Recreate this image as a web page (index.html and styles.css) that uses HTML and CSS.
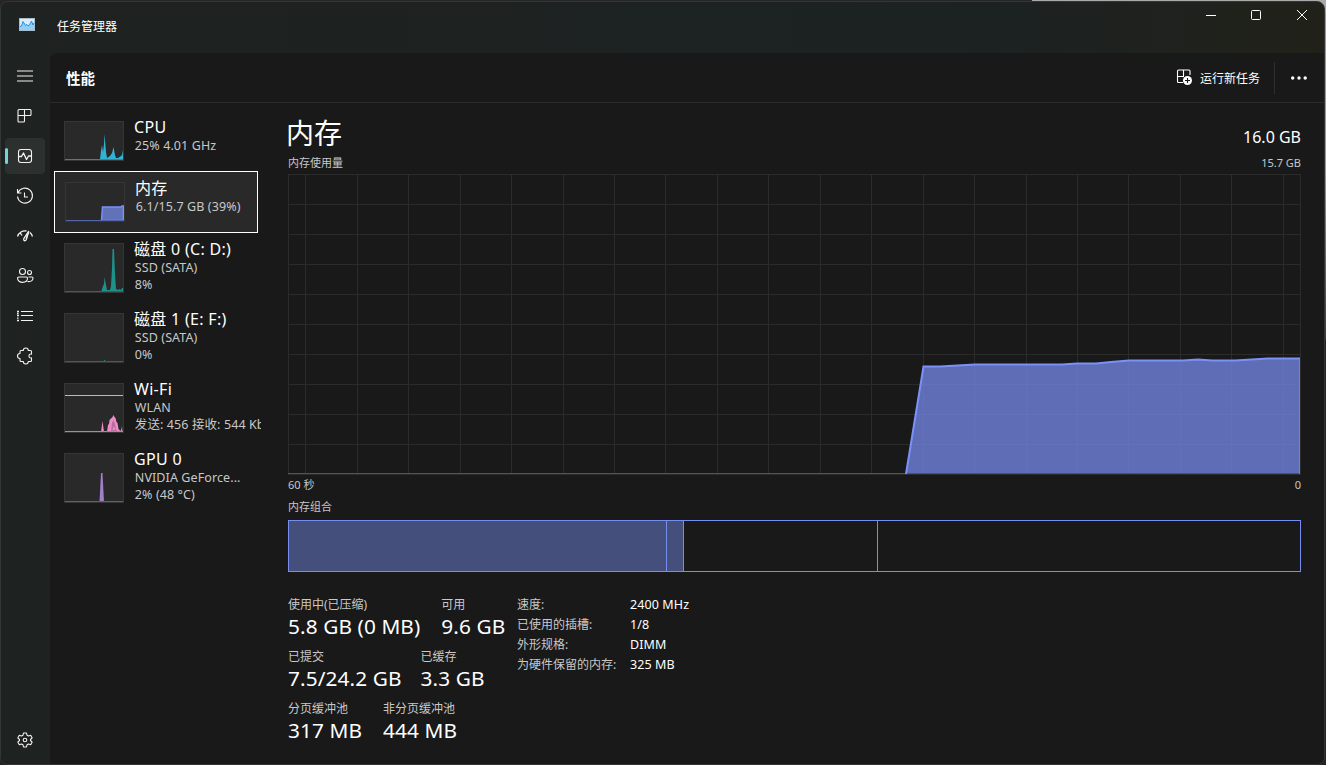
FILE: index.html
```html
<!DOCTYPE html>
<html lang="zh-CN">
<head>
<meta charset="utf-8">
<title>任务管理器</title>
<link rel="stylesheet" href="styles.css">
</head>
<body>
<div class="window">
  <header class="titlebar">
    <svg class="app-icon" width="16" height="13" viewBox="0 0 16 13"><rect x=".5" y=".5" width="15" height="12" fill="#dcebf7" stroke="#a9bccb"/><path d="M1 8.500 2.500 8l1.500-4.500L6.500 7.500 8 6.500l1 1.500 1.500-1 2-4L14 7l1-2v7H1z" fill="#8fd0f8"/><path d="M1 8.500 2.500 8l1.500-4.500L6.500 7.500 8 6.500l1 1.500 1.500-1 2-4L14 7l1-2" fill="none" stroke="#2490e0"/></svg>
    <h1 class="app-title">任务管理器</h1>
    <div class="controls">
      <svg width="46" height="30" viewBox="0 0 46 30"><path d="M18 15.500h10"/></svg>
      <svg width="46" height="30" viewBox="0 0 46 30"><rect x="17.500" y="10.500" width="9" height="9" rx="1"/></svg>
      <svg width="46" height="30" viewBox="0 0 46 30"><path d="m17 10 10 10M27 10 17 20"/></svg>
    </div>
  </header>
  <div class="body">
    <nav class="rail">
      <div class="rail-item"><svg width="20" height="20" viewBox="0 0 20 20"><path d="M2 5.500h16M2 10.500h16M2 15.500h16" transform="translate(0 -.5)"/></svg></div>
      <div class="rail-item"><svg width="20" height="20" viewBox="0 0 20 20"><path d="M4 3.500h11q1 0 1 1v4q0 1-1 1H3M3 4.500q0-1 1-1M3 4.500v10.500q0 1 1 1h4.500q1 0 1-1V3.500"/></svg></div>
      <div class="rail-item active"><svg width="20" height="20" viewBox="0 0 20 20"><rect x="3.500" y="3.500" width="13" height="13" rx="2.500"/><path d="M4 10.500h2.500L8.500 7l3 6.500 2-3.500H16" stroke-width="1.300"/></svg></div>
      <div class="rail-item"><svg width="20" height="20" viewBox="0 0 20 20"><path d="M2.500 3v4h4M3 6.800a7.500 7.500 0 1 1-.5 3.700M9.500 6.500V11H13"/></svg></div>
      <div class="rail-item"><svg width="20" height="20" viewBox="0 0 20 20"><path d="M2.500 10.500a8 8 0 0 1 9-5.500M15 6.500a8 8 0 0 1 2.500 4M5 6.500l2 3M13.500 5.500l-4.700 7.200q-.4 2.300 1.400 2 1-.2 1.300-1.500z" stroke-width="1.300"/><path d="m14 5.500-3 7.500"/></svg></div>
      <div class="rail-item"><svg width="20" height="20" viewBox="0 0 20 20"><circle cx="7.500" cy="5.500" r="3"/><circle cx="14.500" cy="6.500" r="2"/><path d="M4 11h7.500q1 0 1 1c0 5.800-10 5.800-10 0q0-1 1.500-1zM13.500 11H17q1 0 1 1c0 2.500-2 4-5.500 3.500"/></svg></div>
      <div class="rail-item"><svg width="20" height="20" viewBox="0 0 20 20"><path d="M6 5.500h12M6 9.500h12M6 14.500h12"/><path d="M2 5.500h2M2 7.500h1.500M2 9.500h2M2 12.200h1.500M2 14.500h2" stroke-width="1.300"/></svg></div>
      <div class="rail-item"><svg width="20" height="20" viewBox="0 0 20 20"><path d="M5 5.500q0-1 1-1h2.300a2.500 2.500 0 0 1 5 0h2.200q1 0 1 1v2.600q-2.500-.4-2.500 1.900t2.500 1.900v2.600q0 1-1 1h-2.200a2.500 2.500 0 0 1-5 0H6q-1 0-1-1v-2a2.500 2.500 0 0 1 0-5z"/></svg></div>
      <div class="rail-item settings"><svg width="20" height="20" viewBox="0 0 20 20"><path d="M8.500 3h3l.5 2.200 1.500.8 2.200-.7 1.500 2.600L15.500 9.500v1l1.700 1.600-1.500 2.600-2.200-.7-1.500.8-.5 2.200h-3L8 14.800l-1.500-.8-2.200.7-1.500-2.600 1.700-1.600v-1L2.800 7.900l1.500-2.600 2.200.7L8 5.200z"/><circle cx="10" cy="10" r="1.800"/></svg></div>
    </nav>
    <main class="panel">
      <div class="toolbar">
        <h2 class="page-title">性能</h2>
        <button class="run"><svg width="17" height="17" viewBox="0 0 17 17"><path d="M7 13.500H2.500q-1 0-1-1V2q0-1 1-1H13q1 0 1 1v4M7.500 1v6M1.500 7.500H8"/><circle cx="11.500" cy="11.500" r="4.500" class="plus-disc"/><path d="M11.500 9v5M9 11.500h5" class="plus-mark"/></svg>运行新任务</button>
        <button class="more"><svg width="18" height="4" viewBox="0 0 18 4"><circle cx="2.700" cy="2" r="1.700"/><circle cx="9" cy="2" r="1.700"/><circle cx="15.200" cy="2" r="1.700"/></svg></button>
      </div>
      <div class="content">
        <div class="devices">
          <div class="device short">
            <svg class="thumb" width="60" height="40" viewBox="0 0 60 40"><path fill="#30b3d4" d="M0 38h36l1-8 1-6 1 7 1-8 .5-10 1.500 18 1 6 3-2 2-3 1.500-6 1.500 8 1 3h2l3-2 1-1 1-5v10H0z"/><path class="base" stroke="#278ba3" d="M1 38.500h58"/></svg>
            <div class="info"><div class="name">CPU</div><div class="sub">25% 4.01 GHz</div></div>
          </div>
          <div class="device selected">
            <svg class="thumb" width="60" height="40" viewBox="0 0 60 40"><path fill="#6172b9" stroke="#7a91f8" stroke-width="1.500" d="M36.500 38.500 37.500 25H56l1-1h1.500v14.500z"/><path class="base" stroke="#5265a8" d="M1 38.500h58"/></svg>
            <div class="info"><div class="name">内存</div><div class="sub">6.1/15.7 GB (39%)</div></div>
          </div>
          <div class="device">
            <svg class="thumb" width="60" height="50" viewBox="0 0 60 50"><path fill="#1f918b" d="M37 49 39 43l1-2 .5-7 1.500 8 1 5h3l1-4 1-18 .5-19h1.500l1 25 1 15 2 1 1-1 2 1 1-2h1v4z"/><path class="base" stroke="#1c6c67" d="M1 48.500h58"/></svg>
            <div class="info"><div class="name">磁盘 0 (C: D:)</div><div class="sub">SSD (SATA)</div><div class="sub">8%</div></div>
          </div>
          <div class="device">
            <svg class="thumb" width="60" height="50" viewBox="0 0 60 50"><path fill="#1f918b" d="m39 49 1.500-2.500L42 49z"/><path class="base" stroke="#1c6c67" d="M1 48.500h58"/></svg>
            <div class="info"><div class="name">磁盘 1 (E: F:)</div><div class="sub">SSD (SATA)</div><div class="sub">0%</div></div>
          </div>
          <div class="device">
            <svg class="thumb" width="60" height="50" viewBox="0 0 60 50"><path class="base" stroke="#f598cf" d="M1 12.500h58"/><path fill="#f18bc8" d="m37 49 1.500-11L40 49zM43 49l1-7 1-1 .5-4 2-2 1-1 1-2 1 2 1 1 1 4 1 1 1 6 2 2 1-2 .5-3 .5 6z"/><path fill="#b56f9b" d="m47 48 1-8 1.500-3 1.500 4 1 5 1 2zm1.500-1h3l-1.500-4z"/><path class="base" stroke="#c878a8" d="M1 48.500h58"/></svg>
            <div class="info"><div class="name">Wi-Fi</div><div class="sub">WLAN</div><div class="sub clip">发送: 456 接收: 544 Kbps</div></div>
          </div>
          <div class="device">
            <svg class="thumb" width="60" height="50" viewBox="0 0 60 50"><path fill="#a17fc9" d="m35.500 49 1.500-29h1.500l1.500 29z"/><path class="base" stroke="#655d78" d="M1 48.500h58"/></svg>
            <div class="info"><div class="name">GPU 0</div><div class="sub">NVIDIA GeForce...</div><div class="sub">2% (48 °C)</div></div>
          </div>
        </div>
        <section class="detail">
          <div class="heading"><h3>内存</h3><span class="total">16.0 GB</span></div>
          <div class="caption top"><span>内存使用量</span><span>15.7 GB</span></div>
          <svg class="chart" width="1013" height="301" viewBox="288 174 1013 301">
            <path class="grid" d="M288 174.500h1013M288 204.500h1013M288 234.500h1013M288 264.500h1013M288 294.500h1013M288 324.500h1013M288 354.500h1013M288 384.500h1013M288 414.500h1013M288 444.500h1013M288 474.500h1013M288.500 174v300M305.500 174v300M357.500 174v300M408.500 174v300M460.500 174v300M511.500 174v300M563.500 174v300M614.500 174v300M665.500 174v300M717.500 174v300M768.500 174v300M820.500 174v300M871.500 174v300M923.500 174v300M974.500 174v300M1026.500 174v300M1077.500 174v300M1128.500 174v300M1180.500 174v300M1231.500 174v300M1283.500 174v300M1300.500 174v300"/>
            <path class="area" d="M906 474 923.500 366.500H940L975 364.500h87l15-1h19l15-1.500 18-1.500h54l15-1 14 1h23l33-2h32V474z"/>
            <path class="floor" d="M288 473.500h1012"/>
            <path class="curve" d="M906 474 923.500 366.500H940L975 364.500h87l15-1h19l15-1.500 18-1.500h54l15-1 14 1h23l33-2h32"/>
            <path class="edge" d="M1299.500 359v115"/>
          </svg>
          <div class="caption axis"><span>60 秒</span><span>0</span></div>
          <div class="caption comp"><span>内存组合</span></div>
          <div class="composition"><i class="used"></i><i class="modified"></i><i class="standby"></i><i></i></div>
          <div class="stats">
            <div class="figures">
              <div class="row"><div><div class="label">使用中(已压缩)</div><div class="value">5.8 GB (0 MB)</div></div><div><div class="label">可用</div><div class="value">9.6 GB</div></div></div>
              <div class="row tight"><div><div class="label">已提交</div><div class="value">7.5/24.2 GB</div></div><div><div class="label">已缓存</div><div class="value">3.3 GB</div></div></div>
              <div class="row"><div><div class="label">分页缓冲池</div><div class="value">317 MB</div></div><div><div class="label">非分页缓冲池</div><div class="value">444 MB</div></div></div>
            </div>
            <dl class="specs">
              <dt>速度:</dt><dd>2400 MHz</dd>
              <dt>已使用的插槽:</dt><dd>1/8</dd>
              <dt>外形规格:</dt><dd>DIMM</dd>
              <dt>为硬件保留的内存:</dt><dd>325 MB</dd>
            </dl>
          </div>
        </section>
      </div>
    </main>
  </div>
</div>
</body>
</html>
```
FILE: styles.css
```css
* { box-sizing: border-box; }
body {
  margin: 0;
  width: 1326px;
  height: 765px;
  overflow: hidden;
  padding: 1px 1px 0 0;
  background:
    linear-gradient(90deg, #262626 1032px, #aaa 1032px) 0 0 / 100% 12px no-repeat,
    linear-gradient(#999, #999 170px, #3a3a3a 340px) 100% 0 / 1px 340px no-repeat,
    #242424;
  font-family: "Noto Sans", "Noto Sans CJK SC", sans-serif;
  color: #fff;
}
h1, h2, h3, dl, dd { margin: 0; font-weight: 400; }
svg { display: block; flex: none; }
button { border: 0; background: none; color: inherit; font: inherit; padding: 0; }

.window {
  width: 1325px;
  height: 764px;
  border: 1px solid #343636;
  border-radius: 8px;
  overflow: hidden;
  display: flex;
  flex-direction: column;
  background: linear-gradient(90deg, #1e2221 0, #1c2222 75%, #212119 100%);
}
.titlebar { height: 51px; display: flex; align-items: flex-start; padding-left: 18px; }
.app-icon { margin-top: 16px; }
.app-title { margin: 16px 0 0 22px; font-size: 12px; line-height: 18px; }
.controls { margin: -2px -2px 0 auto; display: flex; }
.controls svg { fill: none; stroke: #fff; stroke-width: 1; }

.body { flex: 1; display: flex; min-height: 0; }
.rail { width: 49px; padding: 5px 0 6px 4px; display: flex; flex-direction: column; gap: 4px; background: #1e2221; }
.rail-item { width: 40px; height: 36px; display: flex; align-items: center; justify-content: center; border-radius: 4px; }
.rail-item svg { fill: none; stroke: #f2f2f2; stroke-width: 1.1; stroke-linejoin: round; }
.rail-item.active { background: #2c302f; justify-content: flex-start; }
.rail-item.active::before { content: ""; width: 3px; height: 16px; border-radius: 2px; background: #72d5d5; margin-right: 7px; }
.settings { margin-top: auto; }

.panel { flex: 1; background: #191919; border-top-left-radius: 7px; display: flex; flex-direction: column; }
.toolbar { height: 50px; border-bottom: 1px solid #2b2b2b; display: flex; align-items: center; padding-left: 16px; }
.page-title { font-size: 14.5px; font-weight: 700; line-height: 20px; }
.run { margin-left: auto; display: flex; align-items: center; gap: 7px; height: 32px; padding-right: 14px; border-right: 1px solid #303030; font-size: 12px; }
.run svg { fill: none; stroke: #fff; stroke-width: 1.1; }
.run .plus-disc { fill: #fff; stroke: none; }
.run .plus-mark { stroke: #191919; }
.more { width: 49px; display: flex; justify-content: center; padding-right: 2px; }
.more svg { fill: #fff; }

.content { flex: 1; display: flex; }
.devices { width: 212px; flex: none; padding: 8px 0 0 4px; }
.device { height: 70px; width: 208px; display: flex; padding: 10px 0 0 10px; }
.device.short { height: 60px; }
.device.selected { height: 62px; width: 204px; border: 1px solid #fff; background: #292929; }
.thumb { background: #292929; outline: 1px solid #363636; outline-offset: -1px; }
.base { fill: none; }
.info { margin: -4px 0 0 10px; flex: 1; min-width: 0; white-space: nowrap; }
.name { font-size: 16px; line-height: 20px; letter-spacing: .3px; }
.sub { padding-left: .8px; font-size: 12.5px; line-height: 16px; letter-spacing: .1px; color: #c8c8c8; }
.name + .sub { line-height: 18px; }
.clip { width: 127px; overflow: hidden; }

.detail { flex: 1; padding: 10px 23px 0 26px; }
.heading { display: flex; justify-content: space-between; height: 42px; }
.heading h3 { margin-left: -2px; font-size: 28px; line-height: 40px; }
.total { font-size: 16px; line-height: 48px; }
.caption { display: flex; justify-content: space-between; font-size: 11px; line-height: 16px; color: #c8c8c8; }
.top { height: 19px; }
.grid { fill: none; stroke: #2b2b2b; }
.area { fill: rgba(118, 138, 234, .75); }
.floor { fill: none; stroke: #4a5180; }
.curve { fill: none; stroke: #7a92f8; stroke-width: 2; }
.edge { fill: none; stroke: #6f82d8; }
.axis { height: 22px; padding-top: 2px; }
.comp { height: 23px; padding-top: 2px; }
.composition { height: 52px; display: grid; grid-template-columns: 378px 17px 194px 1fr; border: 1px solid #778df0; }
.composition i { border-right: 1px solid #778df0; }
.composition i:last-child { border-right: 0; }
.composition .used, .composition .modified { background: #454f7c; }
.stats { display: flex; padding-top: 24px; }
.figures { width: 229px; }
.row { display: flex; gap: 21px; height: 52px; white-space: nowrap; }
.row.tight { gap: 19px; }
.label { font-size: 12px; line-height: 18px; color: #c8c8c8; }
.value { font-size: 20.8px; line-height: 24px; letter-spacing: .1px; }
.specs { display: grid; grid-template-columns: 113px auto; grid-auto-rows: 20px; align-content: start; line-height: 18px; font-size: 12px; }
.specs dt { color: #c8c8c8; }
.specs dd { font-size: 12.500px; letter-spacing: .1px; }
```
